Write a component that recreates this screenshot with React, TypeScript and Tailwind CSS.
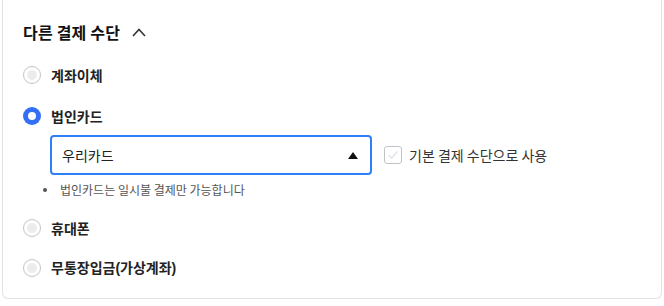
import React from "react";

const font = { fontFamily: '"Noto Sans CJK KR", "Noto Sans", sans-serif' };
const latin = { fontFamily: '"Liberation Sans", sans-serif' };

function Radio({ checked }: { checked?: boolean }) {
  if (checked) {
    return (
      <span className="flex h-[18px] w-[18px] shrink-0 items-center justify-center rounded-full bg-[#3370f5]">
        <span className="h-[8px] w-[8px] rounded-full bg-white" />
      </span>
    );
  }
  return (
    <span className="flex h-[18px] w-[18px] shrink-0 items-center justify-center rounded-full border border-[#c4c4c4] bg-white">
      <span className="h-[10px] w-[10px] rounded-full bg-[#ececec]" />
    </span>
  );
}

function Row({ label, checked, className }: { label: React.ReactNode; checked?: boolean; className?: string }) {
  return (
    <div className={"flex h-[20px] items-center gap-[10px] " + (className ?? "")}>
      <Radio checked={checked} />
      <span className="text-[14px] font-bold text-[#222]">{label}</span>
    </div>
  );
}

export default function App() {
  return (
    <div className="h-[306px] w-[664px] bg-white" style={font}>
      <div className="mx-[2px] flex h-[299px] flex-col rounded-b-[6px] border border-t-0 border-[#e3e3e6] px-[20px] pt-[20px]">
        <div className="flex h-[24px] items-center gap-[12px]">
          <span className="text-[16px] font-bold text-[#111] tracking-[0.2px]">다른 결제 수단</span>
          <svg width="14" height="9" viewBox="0 0 14 9" fill="none">
            <path d="M1 8 L7 1.5 L13 8" stroke="#333" strokeWidth="1.6" />
          </svg>
        </div>
        <Row label="계좌이체" className="mt-[21px]" />
        <Row label="법인카드" checked className="mt-[21px]" />
        <div className="mt-[9px] ml-[27px] flex items-center">
          <div className="flex h-[40px] w-[322px] items-center justify-between rounded-[4px] border-2 border-[#2f7ff6] pl-[10px] pr-[12px]">
            <span className="text-[14px] text-[#222]">우리카드</span>
            <svg width="10" height="7" viewBox="0 0 10 7">
              <path d="M5 0 L10 7 L0 7 Z" fill="#111" />
            </svg>
          </div>
          <div className="ml-[12px] flex items-center gap-[7px]">
            <span className="flex h-[18px] w-[18px] items-center justify-center rounded-[3px] border border-[#bfc3c8] bg-white">
              <svg width="12" height="10" viewBox="0 0 12 10" fill="none">
                <path d="M1.5 5 L4.5 8 L10.5 1.5" stroke="#e2e4e7" strokeWidth="1.5" />
              </svg>
            </span>
            <span className="text-[14px] text-[#333]">기본 결제 수단으로 사용</span>
          </div>
        </div>
        <div className="mt-[7px] flex h-[16px] items-center pl-[20px]">
          <span className="h-[4px] w-[4px] rounded-full bg-[#555]" />
          <span className="ml-[13px] text-[12px] text-[#555]">법인카드는 일시불 결제만 가능합니다</span>
        </div>
        <Row label="휴대폰" className="mt-[20px]" />
        <Row
          label={
            <>
              무통장입금<span style={latin}>(</span>가상계좌<span style={latin}>)</span>
            </>
          }
          className="mt-[20px]"
        />
      </div>
    </div>
  );
}
